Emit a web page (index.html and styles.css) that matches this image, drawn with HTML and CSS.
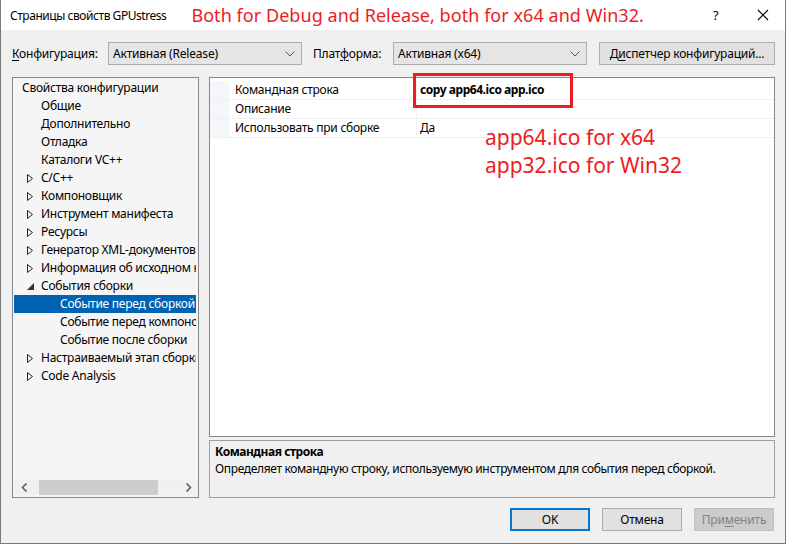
FILE: index.html
```html
<!DOCTYPE html>
<html lang="ru">
<head>
<meta charset="utf-8">
<title>Страницы свойств GPUstress</title>
<link rel="stylesheet" href="styles.css">
</head>
<body>
<div class="window">
  <div class="titlebar">
    <span class="title">Страницы свойств GPUstress</span>
    <span class="note-title">Both for Debug and Release, both for x64 and Win32.</span>
    <span class="tb-help">?</span>
    <span class="tb-close"><svg width="12" height="12" viewBox="0 0 12 12"><path d="M1 1L11 11M11 1L1 11" stroke="#000" stroke-width="1.1" fill="none"/></svg></span>
  </div>
  <div class="body">
    <div class="toolbar">
      <span class="lbl lbl-conf"><u>К</u>онфигурация:</span>
      <div class="combo"><span>Активная (Release)</span><svg class="chev" width="10" height="6" viewBox="0 0 10 6"><path d="M0.5 0.5L5 5L9.5 0.5" stroke="#555" stroke-width="1" fill="none"/></svg></div>
      <span class="lbl lbl-plat">Плат<u>ф</u>орма:</span>
      <div class="combo"><span>Активная (x64)</span><svg class="chev" width="10" height="6" viewBox="0 0 10 6"><path d="M0.5 0.5L5 5L9.5 0.5" stroke="#555" stroke-width="1" fill="none"/></svg></div>
      <button class="btn btn-mgr">Д<u>и</u>спетчер конфигураций...</button>
    </div>
    <div class="main">
      <div class="tree">
        <div class="tree-items">
          <div class="ti l0">Свойства конфигурации</div>
          <div class="ti l1">Общие</div>
          <div class="ti l1">Дополнительно</div>
          <div class="ti l1">Отладка</div>
          <div class="ti l1">Каталоги VC++</div>
          <div class="ti l1 exp"><svg class="arr" width="6" height="9" viewBox="0 0 6 9"><path d="M0.5 0.5L5.5 4.5L0.5 8.5Z" stroke="#222" stroke-width="1" fill="none"/></svg>C/C++</div>
          <div class="ti l1 exp"><svg class="arr" width="6" height="9" viewBox="0 0 6 9"><path d="M0.5 0.5L5.5 4.5L0.5 8.5Z" stroke="#222" stroke-width="1" fill="none"/></svg>Компоновщик</div>
          <div class="ti l1 exp"><svg class="arr" width="6" height="9" viewBox="0 0 6 9"><path d="M0.5 0.5L5.5 4.5L0.5 8.5Z" stroke="#222" stroke-width="1" fill="none"/></svg>Инструмент манифеста</div>
          <div class="ti l1 exp"><svg class="arr" width="6" height="9" viewBox="0 0 6 9"><path d="M0.5 0.5L5.5 4.5L0.5 8.5Z" stroke="#222" stroke-width="1" fill="none"/></svg>Ресурсы</div>
          <div class="ti l1 exp"><svg class="arr" width="6" height="9" viewBox="0 0 6 9"><path d="M0.5 0.5L5.5 4.5L0.5 8.5Z" stroke="#222" stroke-width="1" fill="none"/></svg>Генератор XML-документов</div>
          <div class="ti l1 exp"><svg class="arr" width="6" height="9" viewBox="0 0 6 9"><path d="M0.5 0.5L5.5 4.5L0.5 8.5Z" stroke="#222" stroke-width="1" fill="none"/></svg>Информация об исходном коде</div>
          <div class="ti l1 exp"><svg class="arr open" width="7" height="7" viewBox="0 0 7 7"><path d="M7 0L7 7L0 7Z" fill="#333"/></svg>События сборки</div>
          <div class="ti l2 sel">Событие перед сборкой</div>
          <div class="ti l2">Событие перед компоновкой</div>
          <div class="ti l2">Событие после сборки</div>
          <div class="ti l1 exp"><svg class="arr" width="6" height="9" viewBox="0 0 6 9"><path d="M0.5 0.5L5.5 4.5L0.5 8.5Z" stroke="#222" stroke-width="1" fill="none"/></svg>Настраиваемый этап сборки</div>
          <div class="ti l1 exp"><svg class="arr" width="6" height="9" viewBox="0 0 6 9"><path d="M0.5 0.5L5.5 4.5L0.5 8.5Z" stroke="#222" stroke-width="1" fill="none"/></svg>Code Analysis</div>
        </div>
        <div class="hscroll">
          <svg class="sarr sarr-l" width="7" height="9" viewBox="0 0 7 9"><path d="M5.5 0.5L1.5 4.5L5.5 8.5" stroke="#606060" stroke-width="1.6" fill="none"/></svg>
          <div class="track"><div class="thumb"></div></div>
          <svg class="sarr sarr-r" width="7" height="9" viewBox="0 0 7 9"><path d="M1.5 0.5L5.5 4.5L1.5 8.5" stroke="#606060" stroke-width="1.6" fill="none"/></svg>
        </div>
      </div>
      <div class="right">
        <div class="grid">
          <div class="grow"><div class="gm"></div><div class="gn">Командная строка</div><div class="gv bold">copy app64.ico app.ico</div></div>
          <div class="grow"><div class="gm"></div><div class="gn">Описание</div><div class="gv"></div></div>
          <div class="grow"><div class="gm"></div><div class="gn">Использовать при сборке</div><div class="gv">Да</div></div>
          <div class="note-grid">app64.ico for x64<br>app32.ico for Win32</div>
          <div class="redbox"></div>
        </div>
        <div class="desc">
          <div class="desc-title">Командная строка</div>
          <div class="desc-text">Определяет командную строку, используемую инструментом для события перед сборкой.</div>
        </div>
      </div>
    </div>
    <div class="buttons">
      <button class="btn btn-ok">OK</button>
      <button class="btn btn-cancel">Отмена</button>
      <button class="btn btn-apply" disabled>При<u>м</u>енить</button>
    </div>
  </div>
</div>
</body>
</html>
```
FILE: styles.css
```css
* { box-sizing: border-box; }
html, body { margin: 0; padding: 0; }
body {
  width: 786px;
  height: 544px;
  overflow: hidden;
  font-family: "Noto Sans", "Open Sans", sans-serif;
  font-size: 12px;
  color: #000;
  background: #fff;
}
u { text-decoration: underline; text-underline-offset: 2px; }

.window {
  width: 786px;
  height: 544px;
  border: 1px solid #7a7a7a;
  border-top: none;
  display: flex;
  flex-direction: column;
}

.titlebar {
  height: 30px;
  flex: none;
  background: #fff;
  display: flex;
  align-items: center;
  padding-left: 9px;
}
.title { font-size: 12px; letter-spacing: -0.45px; }
.note-title {
  margin-left: 25px;
  font-size: 18px;
  color: #ec1c24;
  letter-spacing: 0.05px;
}
.tb-help { margin-left: auto; font-size: 13px; width: 20px; margin-right: 24px; }
.tb-close { width: 12px; height: 12px; margin-right: 16px; display: flex; }

.body {
  flex: 1;
  background: #f0f0f0;
  padding: 12px 10px 0 11px;
  display: flex;
  flex-direction: column;
}

.toolbar {
  display: flex;
  align-items: center;
  height: 23px;
}
.lbl { letter-spacing: -0.2px; }
.lbl-conf { width: 96px; }
.lbl-plat { width: 80px; margin-left: 11px; }
.combo {
  width: 194px;
  height: 23px;
  border: 1px solid #acacac;
  background: #e5e5e5;
  display: flex;
  align-items: center;
  padding-left: 4px;
  padding-right: 6px;
  letter-spacing: -0.2px;
}
.combo span { flex: 1; }
.chev { flex: none; }

.btn {
  font-family: inherit;
  font-size: 12px;
  color: #000;
  background: #e1e1e1;
  border: 1px solid #adadad;
  height: 23px;
  padding: 0;
  letter-spacing: -0.2px;
}
.btn-mgr { width: 176px; margin-left: 12px; }

.main {
  display: flex;
  margin-top: 12px;
  height: 421px;
  gap: 10px;
}

.tree {
  width: 187px;
  height: 421px;
  border: 1px solid #828790;
  background: #f5f5f5;
  display: flex;
  flex-direction: column;
  overflow: hidden;
}
.tree-items {
  flex: 1;
  padding-top: 1px;
  margin-right: 2px;
  overflow: hidden;
}
.ti {
  height: 18px;
  line-height: 18px;
  white-space: nowrap;
  overflow: hidden;
  text-overflow: clip;
  position: relative;
  letter-spacing: -0.25px;
  margin-left: 1px;
}
.l0 { padding-left: 8px; }
.l1 { padding-left: 27px; }
.l2 { padding-left: 46px; }
.arr { position: absolute; left: 13px; top: 5px; }
.arr.open { left: 13px; top: 6px; }
.sel { background: #0063b1; color: #fff; }

.hscroll {
  height: 17px;
  margin-bottom: 2px;
  display: flex;
  align-items: center;
  background: #f0f0f0;
  border-top: 1px solid #fafafa;
}
.sarr { flex: none; }
.sarr-l { margin: 0 9px 0 8px; }
.sarr-r { margin: 0 6px 0 8px; }
.track { flex: 1; height: 15px; }
.thumb { width: 119px; height: 15px; background: #cdcdcd; margin-left: 2px; }

.right {
  flex: 1;
  display: flex;
  flex-direction: column;
  gap: 3px;
}
.grid {
  height: 360px;
  border: 1px solid #828790;
  background: #fff;
  padding-top: 3px;
  position: relative;
}
.grow {
  display: flex;
  height: 19px;
  border-bottom: 1px solid #f0f0f0;
}
.gm { width: 19px; background: #f4f6f9; flex: none; }
.gn {
  width: 188px;
  padding-left: 6px;
  line-height: 18px;
  border-right: 1px solid #f0f0f0;
  letter-spacing: -0.25px;
  flex: none;
}
.gv { flex: 1; padding-left: 3px; line-height: 18px; letter-spacing: -0.2px; }
.gv.bold { font-weight: bold; letter-spacing: -0.45px; }

.note-grid {
  position: absolute;
  left: 275px;
  top: 45px;
  font-size: 21px;
  line-height: 28px;
  color: #ec1c24;
  letter-spacing: 0;
}
.redbox {
  position: absolute;
  left: 203px;
  top: -5px;
  width: 160px;
  height: 35px;
  border: 3px solid #ec1c24;
}

.desc {
  height: 58px;
  border: 1px solid #a0a0a0;
  background: #f0f0f0;
  padding: 3px 5px;
}
.desc-title { font-weight: bold; line-height: 16px; letter-spacing: -0.45px; }
.desc-text { line-height: 18px; letter-spacing: -0.35px; }

.buttons {
  display: flex;
  justify-content: flex-end;
  margin-top: 10px;
  gap: 12px;
  padding-right: 1px;
}
.buttons .btn { width: 80px; height: 23px; }
.btn-ok { border: 2px solid #0078d7; }
.btn-apply { background: #cccccc; border-color: #bfbfbf; color: #838383; }
```
